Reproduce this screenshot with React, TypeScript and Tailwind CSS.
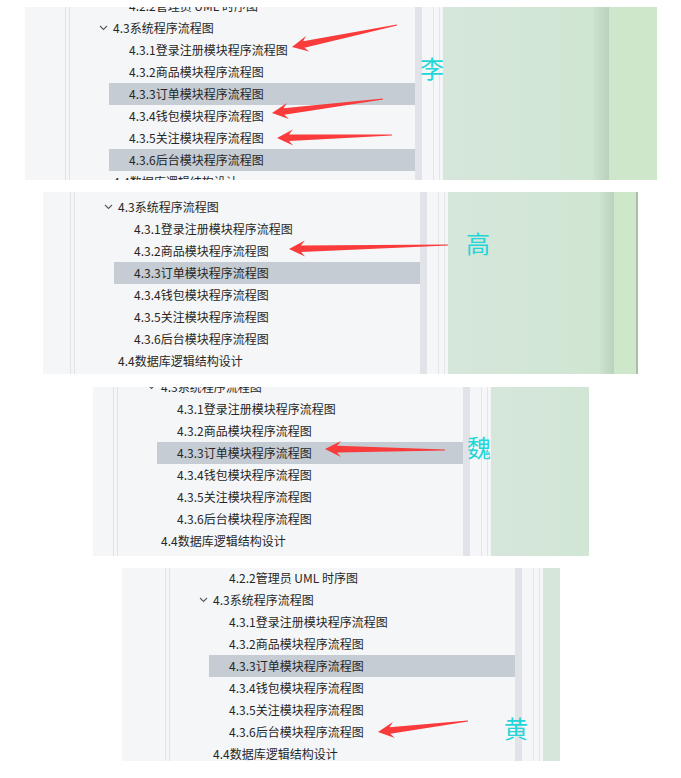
import clsx from "clsx"

type Item = { label: string; level: 2 | 3; open?: boolean; active?: boolean }

const sub = (active: number[]): Item[] =>
  [
    "4.3.1登录注册模块程序流程图",
    "4.3.2商品模块程序流程图",
    "4.3.3订单模块程序流程图",
    "4.3.4钱包模块程序流程图",
    "4.3.5关注模块程序流程图",
    "4.3.6后台模块程序流程图",
  ].map((label, i) => ({ label, level: 3, active: active.includes(i + 1) }))

const head: Item = { label: "4.3系统程序流程图", level: 2, open: true }
const tail: Item = { label: "4.4数据库逻辑结构设计", level: 2 }
const prev: Item = { label: "4.2.2管理员 UML 时序图", level: 3 }

const panels = [
  {
    box: "ml-[25px] mt-[7px] w-[632px] h-[173px]",
    tree: "w-[390px]",
    pad: "w-[40px]",
    offset: "-mt-[12px]",
    items: [prev, head, ...sub([3, 6]), tail],
    green: (
      <>
        <div className="w-[150px] bg-linear-to-r from-[#d6e6db] to-[#cfe6d2]" />
        <div className="w-[16px] bg-linear-to-r from-[#cde3cf] to-[#b9d1bd]" />
        <div className="flex-1 bg-[#cee6ca]" />
      </>
    ),
  },
  {
    box: "ml-[43px] mt-[12px] w-[595px] h-[182px]",
    tree: "w-[377px]",
    pad: "w-[27px]",
    offset: "mt-[4px]",
    items: [head, ...sub([3]), tail],
    green: (
      <>
        <div className="w-[152px] bg-linear-to-r from-[#d6e6db] to-[#cfe6d2]" />
        <div className="w-[14px] bg-linear-to-r from-[#cde3cf] to-[#b9d1bd]" />
        <div className="flex-1 bg-[#cee6ca]" />
        <div className="w-[2px] bg-[#a9bfa8]" />
      </>
    ),
  },
  {
    box: "ml-[93px] mt-[13px] w-[496px] h-[169px]",
    tree: "w-[370px]",
    pad: "w-[20px]",
    offset: "-mt-[11px]",
    items: [head, ...sub([3]), tail],
    green: <div className="flex-1 bg-linear-to-r from-[#d6e6db] to-[#d1e6d5]" />,
  },
  {
    box: "ml-[122px] mt-[12px] w-[438px] h-[193px]",
    tree: "w-[393px]",
    pad: "w-[43px]",
    offset: "-mt-[1px]",
    items: [prev, head, ...sub([3]), tail],
    green: <div className="flex-1 bg-[#d6e6da]" />,
  },
]

const arrows: [number, number, number, number][] = [
  [292, 47, 397, 25],
  [272, 113, 383, 99],
  [277, 138, 392, 135],
  [289, 249, 448, 245],
  [325, 449, 445, 450],
  [378, 732, 468, 721],
]

const names = [
  { ch: "李", pos: "left-[420px] top-[55px]" },
  { ch: "高", pos: "left-[466px] top-[230px]" },
  { ch: "魏", pos: "left-[467px] top-[434px]" },
  { ch: "黄", pos: "left-[504px] top-[715px]" },
]

function arrowPoints(tx: number, ty: number, ex: number, ey: number) {
  const len = Math.hypot(ex - tx, ey - ty)
  const dx = (ex - tx) / len
  const dy = (ey - ty) / len
  const nx = -dy
  const ny = dx
  const L = 16
  const W = 8
  const s = 3.3
  const p = (a: number, b: number) => `${(tx + dx * a + nx * b).toFixed(1)},${(ty + dy * a + ny * b).toFixed(1)}`
  return [
    p(0, 0),
    p(L, W),
    p(L - 4, s),
    `${(ex + nx * 0.6).toFixed(1)},${(ey + ny * 0.6).toFixed(1)}`,
    `${(ex - nx * 0.6).toFixed(1)},${(ey - ny * 0.6).toFixed(1)}`,
    p(L - 4, -s),
    p(L, -W),
  ].join(" ")
}

function Chevron() {
  return (
    <svg width="9" height="6" viewBox="0 0 9 6" className="block">
      <path d="M1 1l3.5 3.5L8 1" fill="none" stroke="#5a5a5a" strokeWidth="1.1" />
    </svg>
  )
}

function Row({ item }: { item: Item }) {
  return (
    <div className="flex h-[22px]">
      <div className="flex w-[14px] items-center pl-[4px]">{item.open && <Chevron />}</div>
      <div
        className={clsx(
          "flex flex-1 items-center whitespace-nowrap text-[12px] text-[#262626]",
          item.level === 3 ? "pl-[20px]" : "pl-[4px]",
          item.active && "bg-[#c5ccd3]"
        )}
      >
        {item.label}
      </div>
    </div>
  )
}

export default function App() {
  return (
    <div className="relative flex h-[778px] w-[681px] flex-col overflow-hidden bg-white font-[family-name:'Noto_Sans_CJK_SC','Noto_Sans',sans-serif]">
      {panels.map((panel, i) => (
        <div key={i} className={clsx("flex shrink-0 overflow-hidden bg-[#f5f6f8]", panel.box)}>
          {/* nav tree */}
          <div className={clsx("flex h-full shrink-0 overflow-hidden", panel.tree)}>
            <div className={clsx("shrink-0", panel.pad)} />
            <div className="w-[4px] shrink-0 border-l border-[#e1e3e7]" />
            <div className="min-w-0 flex-1 border-l border-[#e1e3e7] pl-[25px]">
              <div className={panel.offset}>
                {panel.items.map((item, j) => (
                  <Row key={j} item={item} />
                ))}
              </div>
            </div>
          </div>

          {/* scrollbar + splitter */}
          <div className="w-[7px] shrink-0 bg-[#e1e3e8]" />
          <div className="flex w-[21px] shrink-0">
            <div className="w-[11px]" />
            <div className="w-[6px] border-l border-[#e3e5e9]" />
            <div className="flex-1 border-l border-[#e3e5e9]" />
          </div>

          {/* page */}
          <div className="flex flex-1">{panel.green}</div>
        </div>
      ))}

      <svg className="pointer-events-none absolute inset-0" width="681" height="778">
        {arrows.map(([tx, ty, ex, ey], i) => (
          <polygon key={i} points={arrowPoints(tx, ty, ex, ey)} fill="#f93b3b" />
        ))}
      </svg>

      {names.map((n) => (
        <span
          key={n.ch}
          className={clsx("absolute text-[24px] leading-[26px] text-[#22d6d8]", n.pos)}
        >
          {n.ch}
        </span>
      ))}
    </div>
  )
}
